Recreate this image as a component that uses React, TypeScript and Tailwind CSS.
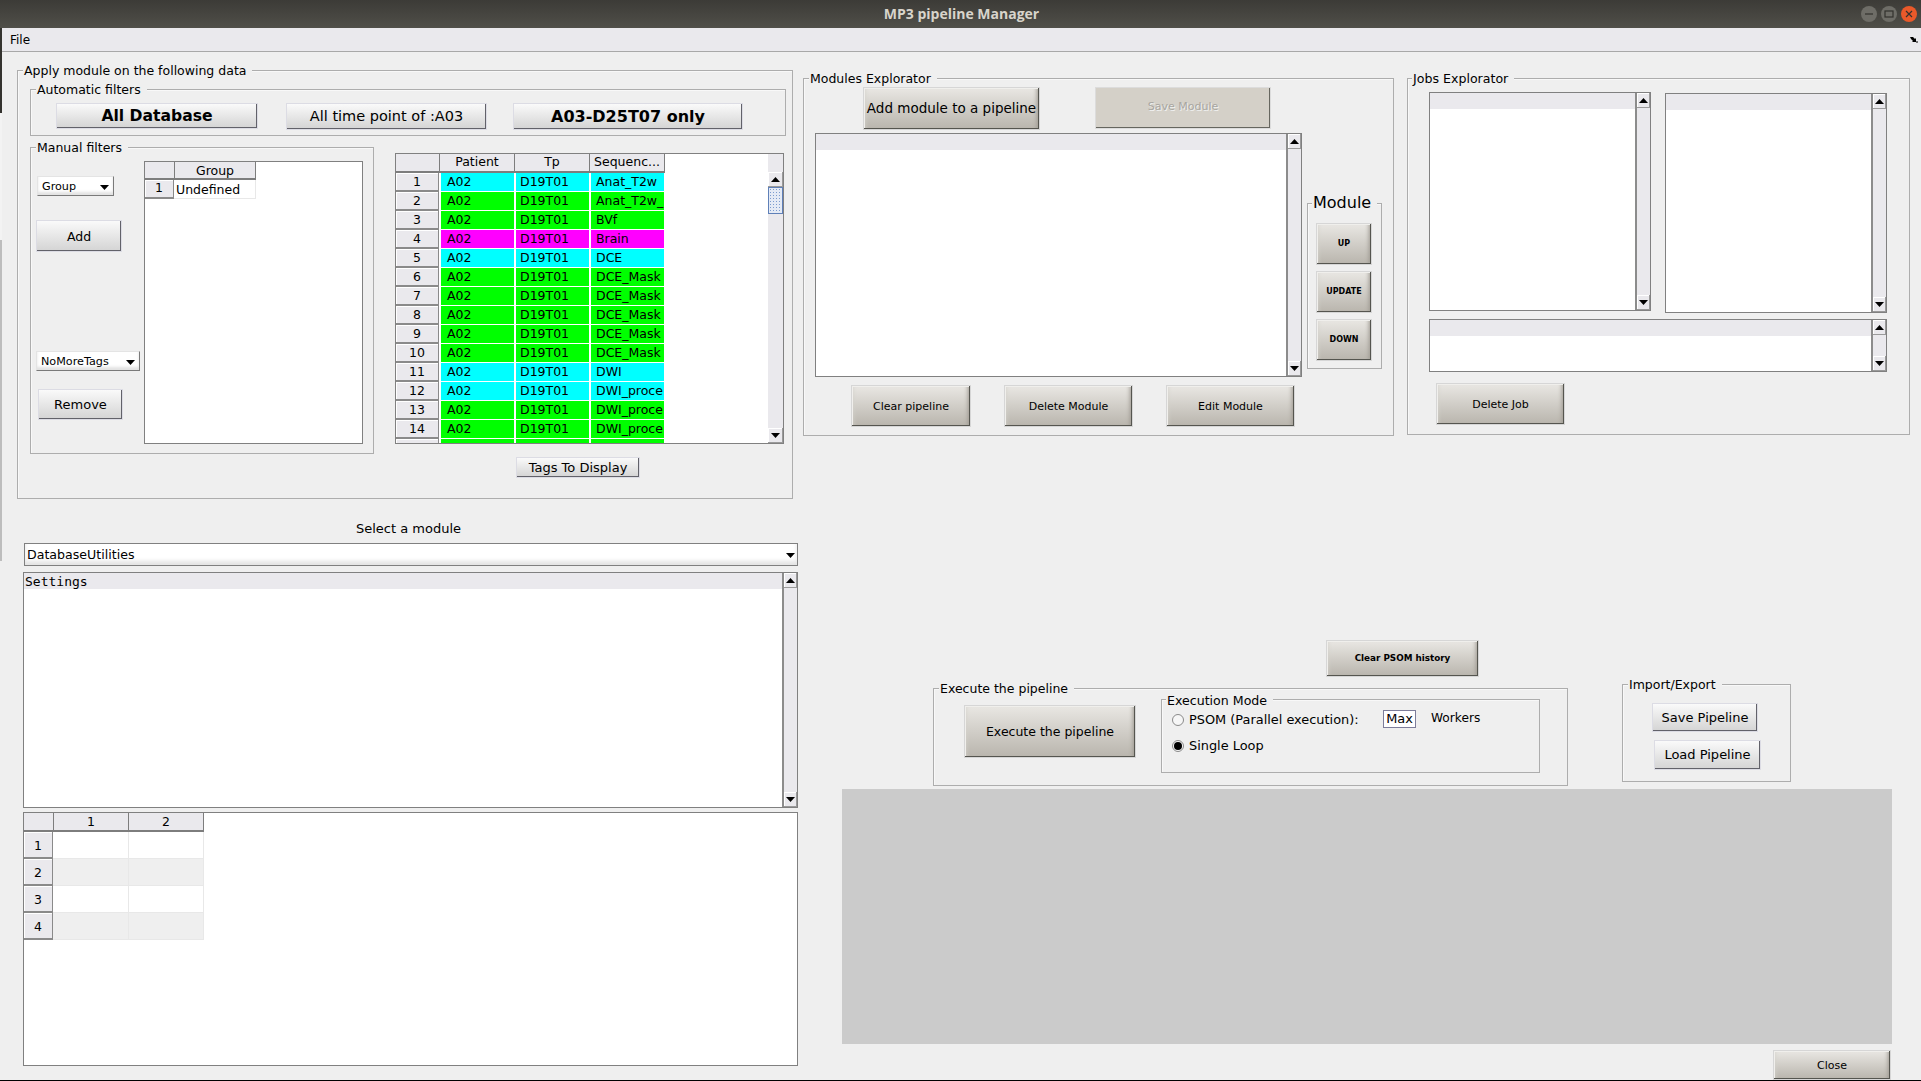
import type { ReactNode } from "react";

const FONT = "font-['DejaVu_Sans',sans-serif]";

// etched frame with its caption sitting on the top edge
function GroupBox({
  title,
  className,
  titleClass = "text-[12.5px]",
  children,
}: {
  title: string;
  className: string;
  titleClass?: string;
  children?: ReactNode;
}) {
  return (
    <div className={`relative shrink-0 border border-[#adadad] shadow-[inset_1px_1px_0_#f8f8f8] ${className}`}>
      <span className={`absolute left-[5px] -top-[8px] bg-[#efefef] pl-[1px] pr-[6px] leading-[16px] whitespace-nowrap text-black ${titleClass}`}>
        {title}
      </span>
      {children}
    </div>
  );
}

function Btn({
  label,
  className,
  textClass = "text-[11px]",
  light = false,
}: {
  label: string;
  className: string;
  textClass?: string;
  light?: boolean;
}) {
  const tone = light
    ? "border-[#dcdce4] bg-gradient-to-b from-[#fafafa] to-[#d4d4d4] shadow-[inset_-1px_-1px_0_#62626a]"
    : "border-[#d6d6d6] bg-gradient-to-b from-[#e9e7e3] to-[#b9b5ad] shadow-[inset_-1px_-1px_0_#55554f,inset_1px_1px_0_#f0efec,inset_4px_0_4px_-3px_#d4d2cc,inset_-5px_0_4px_-3px_#9c9890]";
  return (
    <div className={`flex shrink-0 items-center justify-center whitespace-nowrap border text-black ${tone} ${textClass} ${className}`}>
      {label}
    </div>
  );
}

function Tri({ down = false }: { down?: boolean }) {
  return (
    <svg width="9" height="5" viewBox="0 0 9 5">
      <path d={down ? "M0 0H9L4.5 5Z" : "M0 5H9L4.5 0Z"} fill="#000" />
    </svg>
  );
}

function ArrowBtn({ down = false }: { down?: boolean }) {
  return (
    <div className="flex h-[15px] shrink-0 items-center justify-center border-b border-r border-[#9a9a9a] bg-[#eae9ed] shadow-[inset_1px_1px_0_#fff]">
      <Tri down={down} />
    </div>
  );
}

function ScrollBar() {
  return (
    <div className="flex h-full w-[15px] shrink-0 flex-col border-l-2 border-[#8c8c8c] bg-[#eae9ed]">
      <ArrowBtn />
      <div className="flex-1" />
      <ArrowBtn down />
    </div>
  );
}

// the data table's bar has no dark edge, a blank corner on top and a dotted blue thumb
function TableScrollBar() {
  return (
    <div className="flex h-full w-[15px] shrink-0 flex-col bg-[#eae9ed]">
      <div className="h-[18px] shrink-0" />
      <ArrowBtn />
      <div className="h-[27px] shrink-0 border border-[#5f80b8] bg-[#e4eaf5] bg-[radial-gradient(#7c9ccf_1px,transparent_1px)] bg-[length:3px_3px]" />
      <div className="flex-1" />
      <ArrowBtn down />
    </div>
  );
}

// white list with the empty grey heading strip
function ListBox({ className, children }: { className: string; children?: ReactNode }) {
  return (
    <div className={`flex shrink-0 border border-[#808080] bg-white ${className}`}>
      <div className="min-w-0 flex-1">
        <div className="h-[16px] bg-[#eae9ed]">{children}</div>
      </div>
      <ScrollBar />
    </div>
  );
}

function Combo({ label, className }: { label: string; className: string }) {
  return (
    <div className={`flex shrink-0 items-center justify-between border border-[#e4e4e4] border-r-[#7a7a7a] border-b-[#7a7a7a] bg-white pl-[4px] pr-[4px] pt-[2px] text-[11.2px] text-black shadow-[inset_0_-3px_3px_#e2e2e2] ${className}`}>
      <span>{label}</span>
      <Tri down />
    </div>
  );
}

const HEAD_CELL = "flex items-center justify-center border-r border-b-2 border-[#7d7d7d] bg-[#eae9ed] text-black";
const ROW_HEAD = "flex shrink-0 items-center justify-center border-b-2 border-r border-[#8a8a8a] bg-[#eae9ed] shadow-[inset_1px_1px_0_#fff] text-black";

const CY = "bg-[#00ffff]";
const GR = "bg-[#00ff00]";
const MG = "bg-[#ff00ff]";

const rows: [string, string][] = [
  [CY, "Anat_T2w"],
  [GR, "Anat_T2w_"],
  [GR, "BVf"],
  [MG, "Brain"],
  [CY, "DCE"],
  [GR, "DCE_Mask"],
  [GR, "DCE_Mask"],
  [GR, "DCE_Mask"],
  [GR, "DCE_Mask"],
  [GR, "DCE_Mask"],
  [CY, "DWI"],
  [CY, "DWI_proce"],
  [GR, "DWI_proce"],
  [GR, "DWI_proce"],
  [GR, ""],
];

function DataTable() {
  return (
    <div className="flex h-[291px] w-[389px] overflow-hidden border border-[#808080] bg-white text-[12.5px]">
      <div className="w-[372px] shrink-0 overflow-hidden">
        <div className="flex h-[19px]">
          <div className={`w-[44px] ${HEAD_CELL}`} />
          <div className={`w-[75px] ${HEAD_CELL}`}>Patient</div>
          <div className={`w-[75px] ${HEAD_CELL}`}>Tp</div>
          <div className={`w-[75px] ${HEAD_CELL}`}>Sequenc...</div>
        </div>
        {rows.map(([color, seq], i) => (
          <div key={i} className="flex h-[19px]">
            <div className={`w-[43px] pt-[1px] ${ROW_HEAD}`}>{i < 14 ? i + 1 : ""}</div>
            <div className={`ml-[2px] mb-[1px] w-[73px] pl-[6px] leading-[18px] text-black ${color}`}>{i < 14 ? "A02" : ""}</div>
            <div className={`ml-[2px] mb-[1px] w-[73px] pl-[4px] leading-[18px] text-black ${color}`}>{i < 14 ? "D19T01" : ""}</div>
            <div className={`ml-[2px] mb-[1px] w-[73px] overflow-hidden whitespace-nowrap pl-[5px] leading-[18px] text-black ${color}`}>{seq}</div>
          </div>
        ))}
      </div>
      <TableScrollBar />
    </div>
  );
}

function SettingsGrid() {
  return (
    <div className="ml-[6px] mt-[4px] h-[254px] w-[775px] border border-[#808080] bg-white text-[12.5px]">
      <div className="flex h-[19px]">
        <div className={`w-[30px] ${HEAD_CELL}`} />
        <div className={`w-[75px] pt-[2px] ${HEAD_CELL}`}>1</div>
        <div className={`w-[75px] pt-[2px] ${HEAD_CELL}`}>2</div>
      </div>
      {[1, 2, 3, 4].map((n) => (
        <div key={n} className="flex h-[27px]">
          <div className={`w-[29px] pt-[4px] ${ROW_HEAD}`}>{n}</div>
          <div className={`w-[76px] border-r border-b border-[#e8e8e8] ${n % 2 === 0 ? "bg-[#efefef]" : "bg-white"}`} />
          <div className={`w-[75px] border-r border-b border-[#e8e8e8] ${n % 2 === 0 ? "bg-[#efefef]" : "bg-white"}`} />
        </div>
      ))}
    </div>
  );
}

function WinButton({ color, children }: { color: string; children: ReactNode }) {
  return (
    <div className={`flex h-[16px] w-[16px] items-center justify-center rounded-full ${color}`}>
      <svg width="10" height="10" viewBox="0 0 10 10" fill="none" stroke="#33322e" strokeWidth="1.2">
        {children}
      </svg>
    </div>
  );
}

function Radio({ on = false }: { on?: boolean }) {
  return (
    <div className="flex h-[12px] w-[12px] shrink-0 items-center justify-center rounded-full border border-[#8a8a8a] bg-[#f6f6f6]">
      {on && <div className="h-[8px] w-[8px] rounded-full bg-black" />}
    </div>
  );
}

function LeftColumn() {
  return (
    <div className="w-[804px] shrink-0 pl-[17px] pt-[18px]">
      <GroupBox title="Apply module on the following data" className="h-[429px] w-[776px]">
        <GroupBox title="Automatic filters" className="ml-[12px] mt-[18px] flex h-[47px] w-[756px] pl-[25px] pt-[13px]">
          <Btn label="All Database" light className="h-[26px] w-[202px] pt-[2px]" textClass="text-[15.6px] font-bold" />
          <Btn label="All time point of :A03" light className="ml-[28px] h-[27px] w-[201px]" textClass="text-[14.5px]" />
          <Btn label="A03-D25T07 only" light className="ml-[26px] h-[27px] w-[230px]" textClass="text-[16px] font-bold" />
        </GroupBox>

        <div className="ml-[12px] mt-[11px] flex items-start">
          <GroupBox title="Manual filters" className="flex h-[307px] w-[344px]">
            <div className="flex w-[113px] shrink-0 flex-col items-start">
              <Combo label="Group" className="ml-[6px] mt-[28px] h-[20px] w-[77px]" />
              <Btn label="Add" light className="ml-[5px] mt-[24px] h-[32px] w-[86px]" textClass="text-[12.5px] pt-[2px]" />
              <Combo label="NoMoreTags" className="ml-[5px] mt-[99px] h-[20px] w-[104px]" />
              <Btn label="Remove" light className="ml-[7px] mt-[18px] h-[31px] w-[85px]" textClass="text-[13px]" />
            </div>
            <div className="mt-[13px] h-[283px] w-[219px] border border-[#808080] bg-white text-[12.5px]">
              <div className="flex h-[18px]">
                <div className={`w-[30px] ${HEAD_CELL}`} />
                <div className={`w-[81px] pt-[3px] ${HEAD_CELL}`}>Group</div>
              </div>
              <div className="flex h-[19px]">
                <div className={`w-[29px] ${ROW_HEAD}`}>1</div>
                <div className="w-[82px] border-b border-r border-[#e8e8e8] pl-[2px] leading-[19px] text-black">Undefined</div>
              </div>
            </div>
          </GroupBox>
          <div className="ml-[21px] mt-[6px] flex flex-col items-start">
            <DataTable />
            <Btn label="Tags To Display" light className="ml-[121px] mt-[13px] h-[21px] w-[124px]" textClass="text-[13px]" />
          </div>
        </div>
      </GroupBox>

      <div className="ml-[4px] mt-[22px] h-[16px] w-[775px] text-center text-[13px] leading-[16px] text-black">Select a module</div>
      <div className="ml-[7px] mt-[6px] flex h-[23px] w-[774px] items-center justify-between border border-[#808080] bg-white pl-[2px] pr-[2px] pt-[1px] text-[12.6px] text-black shadow-[inset_0_-4px_4px_#e4e4e4]">
        <span>DatabaseUtilities</span>
        <Tri down />
      </div>
      <ListBox className="ml-[6px] mt-[6px] h-[236px] w-[775px]">
        <div className="pl-[1px] font-['DejaVu_Sans_Mono',monospace] text-[13px] leading-[18px] text-black">Settings</div>
      </ListBox>
      <SettingsGrid />
    </div>
  );
}

function RightColumn() {
  return (
    <div className="min-w-0 flex-1 pt-[26px]">
      <div className="flex items-start">
        <GroupBox title="Modules Explorator" className="-ml-[1px] h-[358px] w-[591px]">
          <div className="ml-[59px] mt-[8px] flex items-start">
            <Btn label="Add module to a pipeline" className="h-[43px] w-[177px]" textClass="text-[13.5px]" />
            <div className="ml-[55px] flex h-[42px] w-[176px] items-center justify-center border border-[#dcdcdc] bg-[#d4d0c8] pb-[2px] text-[11px] text-[#a8a6a0] shadow-[inset_-1px_-1px_0_#66665f] [text-shadow:1px_1px_0_#f0f0f0]">
              Save Module
            </div>
          </div>
          <div className="ml-[11px] mt-[3px] flex items-start">
            <ListBox className="h-[244px] w-[487px]" />
            <GroupBox title="Module" titleClass="text-[16px] -mt-[1px] -ml-[1px]" className="ml-[5px] mt-[70px] flex h-[166px] w-[75px] flex-col pl-[8px] pt-[19px]">
              <Btn label="UP" className="h-[42px] w-[56px]" textClass="text-[8px] font-bold" />
              <Btn label="UPDATE" className="mt-[6px] h-[42px] w-[56px]" textClass="text-[8px] font-bold" />
              <Btn label="DOWN" className="mt-[6px] h-[42px] w-[56px]" textClass="text-[8px] font-bold" />
            </GroupBox>
          </div>
          <div className="ml-[47px] mt-[8px] flex">
            <Btn label="Clear pipeline" className="h-[42px] w-[120px] pt-[2px]" />
            <Btn label="Delete Module" className="ml-[33px] h-[42px] w-[129px] pt-[2px]" />
            <Btn label="Edit Module" className="ml-[33px] h-[42px] w-[129px] pt-[2px]" />
          </div>
        </GroupBox>

        <GroupBox title="Jobs Explorator" titleClass="text-[12.6px] -ml-[1px]" className="ml-[13px] h-[357px] w-[503px]">
          <div className="ml-[21px] mt-[13px] flex items-start">
            <ListBox className="h-[219px] w-[222px]" />
            <ListBox className="ml-[14px] mt-[1px] h-[220px] w-[222px]" />
          </div>
          <ListBox className="ml-[21px] mt-[6px] h-[53px] w-[458px]" />
          <Btn label="Delete Job" className="ml-[28px] mt-[11px] h-[42px] w-[129px] pt-[2px]" />
        </GroupBox>
      </div>

      <Btn label="Clear PSOM history" className="ml-[522px] mt-[204px] h-[37px] w-[153px]" textClass="text-[8.8px] font-bold" />

      <div className="mt-[6px] flex h-[103px] items-start">
        <GroupBox title="Execute the pipeline" className="ml-[129px] mt-[5px] flex h-[98px] w-[635px] items-start">
          <Btn label="Execute the pipeline" className="ml-[30px] mt-[16px] h-[53px] w-[172px] pt-[2px]" textClass="text-[12.5px]" />
          <GroupBox title="Execution Mode" titleClass="text-[12.6px] mt-[1px] -ml-[1px]" className="ml-[25px] mt-[10px] h-[74px] w-[379px]">
            <div className="ml-[10px] mt-[12px] flex h-[16px] items-center text-[12.9px] text-black">
              <Radio />
              <span className="ml-[5px] w-[194px]">PSOM (Parallel execution):</span>
              <div className="mb-[2px] flex h-[18px] w-[33px] items-center justify-center border border-[#7d7d9a] bg-white">Max</div>
              <span className="mb-[4px] ml-[15px] text-[12.2px]">Workers</span>
            </div>
            <div className="ml-[10px] mt-[10px] flex h-[16px] items-center text-[12.9px] text-black">
              <Radio on />
              <span className="ml-[5px]">Single Loop</span>
            </div>
          </GroupBox>
        </GroupBox>
        <GroupBox title="Import/Export" className="ml-[54px] mt-[1px] h-[98px] w-[169px]">
          <Btn label="Save Pipeline" light className="ml-[29px] mt-[18px] h-[29px] w-[106px]" textClass="text-[13px]" />
          <Btn label="Load Pipeline" light className="ml-[31px] mt-[8px] h-[30px] w-[107px]" textClass="text-[13px]" />
        </GroupBox>
      </div>

      <div className="ml-[38px] mt-[3px] h-[255px] w-[1050px] bg-[#cbcbcb]" />
      <Btn label="Close" className="ml-[969px] mt-[6px] h-[30px] w-[118px] pt-[2px]" textClass="text-[11px]" />
    </div>
  );
}

export default function App() {
  return (
    <div className={`relative flex h-[1081px] w-[1921px] flex-col overflow-hidden bg-[#efefef] ${FONT}`}>
      {/* sliver of the window behind, along the left edge */}
      <div className="absolute left-0 top-0 flex h-[561px] w-[2px] flex-col">
        <div className="h-[113px] bg-[#34332f]" />
        <div className="h-[127px] bg-[#f3f3f3]" />
        <div className="flex-1 bg-[#bdbdbd]" />
      </div>

      <div className="relative flex h-[28px] shrink-0 items-center justify-center bg-gradient-to-b from-[#3c3b37] to-[#504f49]">
        <span className="mb-[2px] ml-[2px] font-['Open_Sans',sans-serif] text-[14px] font-bold text-[#d8d4cb]">MP3 pipeline Manager</span>
        <div className="absolute right-[4px] top-[6px] flex gap-[4px]">
          <WinButton color="bg-[#6e6d67]"><path d="M1 5H9" /></WinButton>
          <WinButton color="bg-[#6e6d67]"><rect x="1" y="2" width="8" height="6" /></WinButton>
          <WinButton color="bg-[#e9592a]"><path d="M2 2L8 8M8 2L2 8" /></WinButton>
        </div>
      </div>

      <div className="ml-[2px] flex h-[24px] shrink-0 items-center justify-between border-b border-[#a8a8a8] bg-[#eae9ed] pl-[8px] pr-[3px] text-[12px] text-black">
        <span>File</span>
        <svg width="8" height="7" viewBox="0 0 8 7">
          <path d="M0 1H3L5 3L6 2V6H2L3 5L1 3Z" fill="#000" />
          <path d="M6 6H8" stroke="#000" />
        </svg>
      </div>

      <div className="flex min-h-0 flex-1">
        <LeftColumn />
        <RightColumn />
      </div>
      <div className="h-[1px] shrink-0 bg-black" />
    </div>
  );
}
